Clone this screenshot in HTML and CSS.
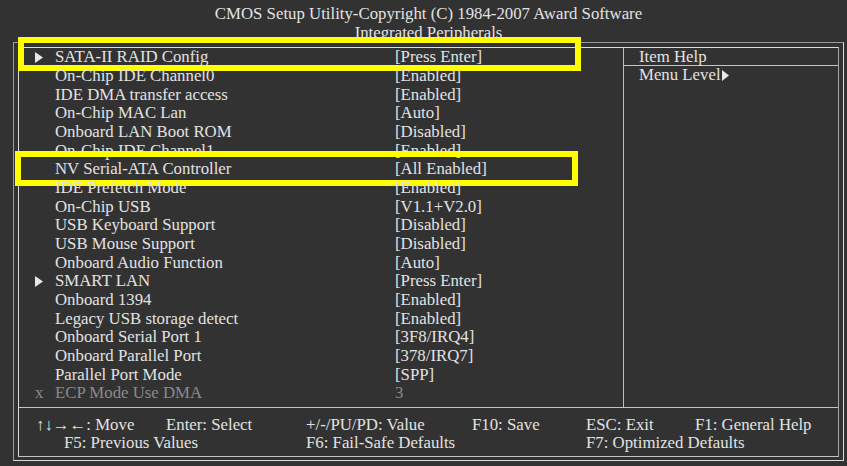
FILE: index.html
```html
<!DOCTYPE html>
<html lang="en">
<head>
    <meta charset="UTF-8">
    <title>CMOS Setup Utility - Integrated Peripherals</title>
    <link rel="stylesheet" href="styles.css">
</head>
<body>
    <div class="title">
        <div>CMOS Setup Utility-Copyright (C) 1984-2007 Award Software</div>
        <div>Integrated Peripherals</div>
    </div>

    <div class="frame">
        <div class="inner">
            <div class="main">
                <div class="list">
                    <div class="row mark">
                        <span class="marker"><svg width="8" height="11" viewBox="0 0 8 11"><path d="M0 0 L8 5.5 L0 11 Z" fill="#e8e8e8"/></svg></span>
                        <span class="label">SATA-II RAID Config</span>
                        <span class="value">[Press Enter]</span>
                    </div>
                    <div class="row">
                        <span class="marker"></span>
                        <span class="label">On-Chip IDE Channel0</span>
                        <span class="value">[Enabled]</span>
                    </div>
                    <div class="row">
                        <span class="marker"></span>
                        <span class="label">IDE DMA transfer access</span>
                        <span class="value">[Enabled]</span>
                    </div>
                    <div class="row">
                        <span class="marker"></span>
                        <span class="label">On-Chip MAC Lan</span>
                        <span class="value">[Auto]</span>
                    </div>
                    <div class="row">
                        <span class="marker"></span>
                        <span class="label">Onboard LAN Boot ROM</span>
                        <span class="value">[Disabled]</span>
                    </div>
                    <div class="row">
                        <span class="marker"></span>
                        <span class="label">On-Chip IDE Channel1</span>
                        <span class="value">[Enabled]</span>
                    </div>
                    <div class="row mark2">
                        <span class="marker"></span>
                        <span class="label">NV Serial-ATA Controller</span>
                        <span class="value">[All Enabled]</span>
                    </div>
                    <div class="row">
                        <span class="marker"></span>
                        <span class="label">IDE Prefetch Mode</span>
                        <span class="value">[Enabled]</span>
                    </div>
                    <div class="row">
                        <span class="marker"></span>
                        <span class="label">On-Chip USB</span>
                        <span class="value">[V1.1+V2.0]</span>
                    </div>
                    <div class="row">
                        <span class="marker"></span>
                        <span class="label">USB Keyboard Support</span>
                        <span class="value">[Disabled]</span>
                    </div>
                    <div class="row">
                        <span class="marker"></span>
                        <span class="label">USB Mouse Support</span>
                        <span class="value">[Disabled]</span>
                    </div>
                    <div class="row">
                        <span class="marker"></span>
                        <span class="label">Onboard Audio Function</span>
                        <span class="value">[Auto]</span>
                    </div>
                    <div class="row">
                        <span class="marker"><svg width="8" height="11" viewBox="0 0 8 11"><path d="M0 0 L8 5.5 L0 11 Z" fill="#e8e8e8"/></svg></span>
                        <span class="label">SMART LAN</span>
                        <span class="value">[Press Enter]</span>
                    </div>
                    <div class="row">
                        <span class="marker"></span>
                        <span class="label">Onboard 1394</span>
                        <span class="value">[Enabled]</span>
                    </div>
                    <div class="row">
                        <span class="marker"></span>
                        <span class="label">Legacy USB storage detect</span>
                        <span class="value">[Enabled]</span>
                    </div>
                    <div class="row">
                        <span class="marker"></span>
                        <span class="label">Onboard Serial Port 1</span>
                        <span class="value">[3F8/IRQ4]</span>
                    </div>
                    <div class="row">
                        <span class="marker"></span>
                        <span class="label">Onboard Parallel Port</span>
                        <span class="value">[378/IRQ7]</span>
                    </div>
                    <div class="row">
                        <span class="marker"></span>
                        <span class="label">Parallel Port Mode</span>
                        <span class="value">[SPP]</span>
                    </div>
                    <div class="row off">
                        <span class="marker">x</span>
                        <span class="label">ECP Mode Use DMA</span>
                        <span class="value">3</span>
                    </div>
                </div>
                <div class="help">
                    <div class="help-head">Item Help</div>
                    <div class="help-body">Menu Level<svg width="7" height="11" viewBox="0 0 7 11"><path d="M0 0 L7 5.5 L0 11 Z" fill="#e8e8e8"/></svg></div>
                </div>
            </div>
            <div class="keys">
                <span class="k1">↑↓→←: Move</span>
                <span>Enter: Select</span>
                <span>+/-/PU/PD: Value</span>
                <span>F10: Save</span>
                <span>ESC: Exit</span>
                <span>F1: General Help</span>
                <span class="k5">F5: Previous Values</span>
                <span class="k6">F6: Fail-Safe Defaults</span>
                <span class="k7">F7: Optimized Defaults</span>
            </div>
        </div>
    </div>
</body>
</html>
```

FILE: styles.css
```css
body {
    margin: 0;
    padding-top: 5px;
    background-color: #323232;
    color: #e2e2e2;
    font-family: "Liberation Serif", "Times New Roman", serif;
    font-size: 16.8px;
    line-height: 18.67px;
}
.title {
    margin-left: 13px;
    width: 831px;
    text-align: center;
}
.frame {
    margin-left: 13px;
    width: 821px;
    height: 409px;
    padding: 4px;
    border: 1px solid #9a9a9a;
    border-right-color: #dcdcdc;
    border-bottom-color: #dcdcdc;
}
.inner {
    height: 408px;
    border: 1px solid #dcdcdc;
    border-right-color: #a8a8a8;
    border-bottom-color: #c4c4c4;
}
.main {
    display: flex;
    height: 359px;
    border-bottom: 1px solid #c4c4c4;
}
.list {
    width: 604px;
    border-right: 1px solid #bcbcbc;
}
.row {
    position: relative;
    display: flex;
    height: 18.67px;
}
.marker {
    width: 20px;
    padding-left: 16px;
    display: flex;
    align-items: center;
}
.label {
    width: 340px;
}
.off {
    color: #8a8a8a;
}
/* yellow highlight boxes drawn over the rows */
.mark::after,
.mark2::after {
    content: "";
    position: absolute;
    left: -1px;
    top: -11px;
    width: 551px;
    height: 22px;
    border: 6px solid #ffff00;
}
.mark2::after {
    left: -4px;
    top: -9px;
    width: 551px;
    height: 23px;
}
.help {
    flex: 1;
}
.help-head {
    height: 17px;
    padding-left: 15px;
    border-bottom: 1px solid #c4c4c4;
}
.help-body {
    padding-left: 15px;
    display: flex;
    align-items: center;
    height: 18.67px;
}
.help-body svg {
    margin-left: 1px;
}
.keys {
    display: grid;
    grid-template-columns: 130px 140px 166px 114px 109px auto;
    padding: 8px 0 0 17px;
    line-height: 17.5px;
}
.k5 {
    grid-column: 1 / 3;
    padding-left: 28px;
}
.k6 {
    grid-column: 3 / 5;
}
.k7 {
    grid-column: 5 / 7;
}
```
